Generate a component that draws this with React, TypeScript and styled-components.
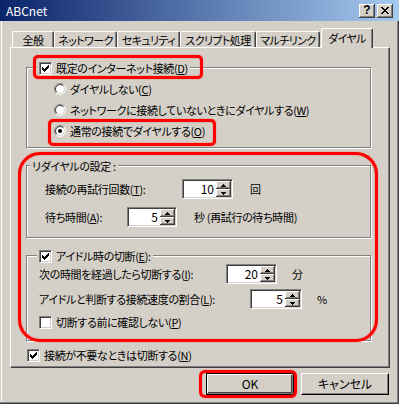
import React from "react";
import styled, { createGlobalStyle } from "styled-components";

const Global = createGlobalStyle`
  html, body { margin: 0; padding: 0; background: #D4D0C8; }
  body {
    font-family: "Noto Sans CJK JP", "Noto Sans", sans-serif;
    font-size: 11px;
    color: #000;
    font-feature-settings: "palt" 1;
    letter-spacing: -0.35px;
  }
  * { box-sizing: border-box; }
  u { text-decoration: underline; text-underline-offset: 1px; }
`;

const Window = styled.div`
  width: 399px;
  height: 404px;
  overflow: hidden;
  background: #d4d0c8;
  display: flex;
  flex-direction: column;
  box-shadow: inset -1px -1px 0 #404040, inset -2px -2px 0 #808080,
    inset 1px 0 0 #d4d0c8, inset 2px 0 0 #ffffff;
`;

const TitleBar = styled.div`
  height: 21px;
  flex: none;
  display: flex;
  align-items: center;
  justify-content: space-between;
  padding: 0 6px 0 6px;
  background: linear-gradient(to right, #0a246a, #a6caf0);
`;

const Title = styled.span`
  color: #fff;
  font-size: 12px;
  line-height: 14px;
  letter-spacing: 0;
`;

const CaptionButtons = styled.div`
  display: flex;
  gap: 2px;
`;

const CaptionBtn = styled.div`
  width: 16px;
  height: 14px;
  background: #d4d0c8;
  display: flex;
  align-items: center;
  justify-content: center;
  box-shadow: inset -1px -1px 0 #404040, inset 1px 1px 0 #fff,
    inset -2px -2px 0 #808080;
  font-family: "Liberation Sans", Arial, sans-serif;
  font-weight: bold;
  font-size: 12px;
  line-height: 12px;
  letter-spacing: 0;
  padding-bottom: 1px;
`;

const TabRow = styled.div`
  display: flex;
  align-items: flex-end;
  height: 19px;
  margin: 7px 0 0 12px;
  position: relative;
  z-index: 1;
`;

const Tab = styled.div<{ $w: number; $active?: boolean; $ml?: number }>`
  width: ${(p) => p.$w}px;
  height: ${(p) => (p.$active ? 20 : 16)}px;
  margin-left: ${(p) => p.$ml ?? 0}px;
  margin-bottom: ${(p) => (p.$active ? -1 : 0)}px;
  background: #d4d0c8;
  border-top: 1px solid #fff;
  border-left: 1px solid #fff;
  border-right: 1px solid #404040;
  border-radius: 2px 2px 0 0;
  box-shadow: inset -1px 0 0 #808080;
  display: flex;
  align-items: ${(p) => (p.$active ? "flex-start" : "center")};
  padding-top: ${(p) => (p.$active ? 2 : 0)}px;
  justify-content: center;
  white-space: nowrap;
  line-height: 14px;
  letter-spacing: -0.6px;
`;

const Panel = styled.div`
  width: 380px;
  height: 321px;
  margin-left: 10px;
  flex: none;
  border-top: 1px solid #fff;
  border-left: 1px solid #fff;
  border-right: 1px solid #404040;
  border-bottom: 1px solid #404040;
  box-shadow: inset -1px -1px 0 #808080;
  padding: 19px 0 0 15px;
  display: flex;
  flex-direction: column;
  align-items: flex-start;
`;

const Group = styled.div<{ $h: number; $mt?: number }>`
  position: relative;
  width: 345px;
  height: ${(p) => p.$h}px;
  margin-top: ${(p) => p.$mt ?? 0}px;
  flex: none;
  border: 1px solid #808080;
  box-shadow: 1px 1px 0 #fff, inset 1px 1px 0 #fff;
  display: flex;
  flex-direction: column;
  align-items: flex-start;
`;

const GroupBody = styled.div<{ $pad: number }>`
  padding-left: ${(p) => p.$pad}px;
  display: flex;
  flex-direction: column;
  align-items: flex-start;
`;

const Legend = styled.div<{ $ml: number }>`
  height: 16px;
  margin-top: -8px;
  margin-left: ${(p) => p.$ml}px;
  padding: 0 2px;
  background: #d4d0c8;
  display: flex;
  align-items: center;
  gap: 4px;
  white-space: nowrap;
  line-height: 14px;
`;

const GroupPair = styled.div`
  position: relative;
  margin-top: 17px;
  display: flex;
  flex-direction: column;
`;

const OptionRow = styled.div<{ $mt?: number; $ml?: number }>`
  height: 14px;
  margin-top: ${(p) => p.$mt ?? 0}px;
  margin-left: ${(p) => p.$ml ?? 0}px;
  display: flex;
  align-items: center;
  gap: 4px;
  white-space: nowrap;
  line-height: 14px;
`;

const FieldRow = styled.div<{ $mt?: number }>`
  height: 20px;
  margin-top: ${(p) => p.$mt ?? 0}px;
  display: flex;
  align-items: center;
  white-space: nowrap;
  line-height: 14px;
`;

const FieldLabel = styled.span<{ $w: number }>`
  width: ${(p) => p.$w}px;
  flex: none;
`;

const Unit = styled.span<{ $ml: number }>`
  margin-left: ${(p) => p.$ml}px;
`;

const SpinBox = styled.div<{ $w: number }>`
  width: ${(p) => p.$w}px;
  height: 20px;
  flex: none;
  display: flex;
  background: #fff;
  border: 1px solid;
  border-color: #808080 #fff #fff #808080;
  box-shadow: inset 1px 1px 0 #404040, inset -1px -1px 0 #d4d0c8;
  padding: 1px;
`;

const SpinValue = styled.span`
  flex: 1;
  text-align: right;
  padding-right: 2px;
  line-height: 16px;
  font-size: 12px;
  letter-spacing: 0;
`;

const SpinButtons = styled.div`
  width: 15px;
  display: flex;
  flex-direction: column;
`;

const SpinBtn = styled.div`
  flex: 1;
  background: #d4d0c8;
  display: flex;
  align-items: center;
  justify-content: center;
  box-shadow: inset -1px -1px 0 #404040, inset 1px 1px 0 #fff,
    inset -2px -2px 0 #808080;
`;

const BoxCheck = styled.div`
  width: 13px;
  height: 13px;
  flex: none;
  background: #fff;
  border: 1px solid;
  border-color: #808080 #fff #fff #808080;
  box-shadow: inset 1px 1px 0 #404040, inset -1px -1px 0 #d4d0c8;
  display: flex;
  align-items: center;
  justify-content: center;
`;

const ButtonRow = styled.div`
  display: flex;
  justify-content: flex-end;
  gap: 7px;
  padding-right: 10px;
  margin-top: 5px;
`;

const PushButton = styled.div<{ $default?: boolean }>`
  position: relative;
  width: 88px;
  height: 22px;
  display: flex;
  align-items: center;
  justify-content: center;
  background: #d4d0c8;
  border: 1px solid ${(p) => (p.$default ? "#000" : "#fff")};
  border-right-color: #000;
  border-bottom-color: #000;
  box-shadow: inset -1px -1px 0 #808080
    ${(p) => (p.$default ? ", inset 1px 1px 0 #fff, inset -2px -2px 0 #404040" : "")};
  line-height: 14px;
  font-size: 12px;
  letter-spacing: 0;
`;

const Highlight = styled.div<{ $l: number; $t: number; $w: number; $h: number; $r: number }>`
  position: absolute;
  left: ${(p) => p.$l}px;
  top: ${(p) => p.$t}px;
  width: ${(p) => p.$w}px;
  height: ${(p) => p.$h}px;
  border: 3px solid #ff0000;
  border-radius: ${(p) => p.$r}px;
  box-shadow: 0 0 1px #ff0000, inset 0 0 1px #ff0000;
  pointer-events: none;
`;

const PixelArt = ({ rows }: { rows: string[] }) => {
  const w = rows[0].length;
  const h = rows.length;
  let d = "";
  rows.forEach((r, y) => {
    for (let x = 0; x < r.length; x++) if (r[x] === "#") d += `M${x} ${y}h1v1h-1z`;
  });
  return (
    <svg width={w} height={h} viewBox={`0 0 ${w} ${h}`} shapeRendering="crispEdges">
      <path d={d} fill="#000" />
    </svg>
  );
};

const CLOSE = [
  "##....##",
  ".##..##.",
  "..####..",
  "...##...",
  "..####..",
  ".##..##.",
  "##....##",
];

const CHECK = [
  "......#",
  ".....##",
  "#...###",
  "##.###.",
  "#####..",
  ".###...",
  "..#....",
];

const UP = ["..#..", ".###.", "#####"];
const DOWN = ["#####", ".###.", "..#.."];

const CheckBox = ({ checked }: { checked?: boolean }) => (
  <BoxCheck>{checked && <PixelArt rows={CHECK} />}</BoxCheck>
);

const Radio = ({ checked }: { checked?: boolean }) => {
  const arc = (r: number, sweep: number, color: string) => {
    const k = r * 0.7071;
    return (
      <path
        d={`M${6 - k} ${6 + k} A${r} ${r} 0 0 ${sweep} ${6 + k} ${6 - k}`}
        stroke={color}
        fill="none"
        strokeWidth={1}
      />
    );
  };
  return (
    <svg width="12" height="12" viewBox="0 0 12 12" style={{ flex: "none" }}>
      <circle cx="6" cy="6" r="5" fill="#fff" />
      {arc(5.5, 1, "#808080")}
      {arc(5.5, 0, "#ffffff")}
      {arc(4.5, 1, "#404040")}
      {arc(4.5, 0, "#d4d0c8")}
      {checked && <circle cx="6" cy="6" r="2" fill="#000" />}
    </svg>
  );
};

const Spinner = ({ value, w }: { value: string; w: number }) => (
  <SpinBox $w={w}>
    <SpinValue>{value}</SpinValue>
    <SpinButtons>
      <SpinBtn>
        <PixelArt rows={UP} />
      </SpinBtn>
      <SpinBtn>
        <PixelArt rows={DOWN} />
      </SpinBtn>
    </SpinButtons>
  </SpinBox>
);

const tabs: { label: string; w: number }[] = [
  { label: "全般", w: 42 },
  { label: "ネットワーク", w: 63 },
  { label: "セキュリティ", w: 63 },
  { label: "スクリプト処理", w: 76 },
  { label: "マルチリンク", w: 64 },
];

export default function App() {
  return (
    <>
      <Global />
      <Window>
        <TitleBar>
          <Title>ABCnet</Title>
          <CaptionButtons>
            <CaptionBtn>?</CaptionBtn>
            <CaptionBtn>
              <PixelArt rows={CLOSE} />
            </CaptionBtn>
          </CaptionButtons>
        </TitleBar>

        <TabRow>
          {tabs.map((t) => (
            <Tab key={t.label} $w={t.w}>
              {t.label}
            </Tab>
          ))}
          <Tab $w={52} $ml={1} $active>
            ダイヤル
          </Tab>
        </TabRow>

        <Panel>
          <Group $h={81}>
            <Legend $ml={10}>
              <CheckBox checked />
              <span>
                既定のインターネット接続(<u>D</u>)
              </span>
            </Legend>
            <GroupBody $pad={27}>
              <OptionRow $mt={6}>
                <Radio />
                <span>
                  ダイヤルしない(<u>C</u>)
                </span>
              </OptionRow>
              <OptionRow $mt={7}>
                <Radio />
                <span>
                  ネットワークに接続していないときにダイヤルする(<u>W</u>)
                </span>
              </OptionRow>
              <OptionRow $mt={7}>
                <Radio checked />
                <span>
                  通常の接続でダイヤルする(<u>O</u>)
                </span>
              </OptionRow>
            </GroupBody>
            <Highlight $l={6} $t={-13} $w={170} $h={24} $r={5} />
            <Highlight $l={21} $t={51} $w={168} $h={27} $r={5} />
          </Group>

          <GroupPair>
            <Group $h={73}>
              <Legend $ml={3}>リダイヤルの設定 :</Legend>
              <GroupBody $pad={18}>
                <FieldRow $mt={5}>
                  <FieldLabel $w={137}>
                    接続の再試行回数(<u>T</u>):
                  </FieldLabel>
                  <Spinner value="10" w={51} />
                  <Unit $ml={17}>回</Unit>
                </FieldRow>
                <FieldRow $mt={8}>
                  <FieldLabel $w={82}>
                    待ち時間(<u>A</u>):
                  </FieldLabel>
                  <Spinner value="5" w={50} />
                  <Unit $ml={17}>秒 (再試行の待ち時間)</Unit>
                </FieldRow>
              </GroupBody>
            </Group>

            <Group $h={86} $mt={17}>
              <Legend $ml={10}>
                <CheckBox checked />
                <span>
                  アイドル時の切断(<u>E</u>):
                </span>
              </Legend>
              <GroupBody $pad={12}>
                <FieldRow>
                  <FieldLabel $w={187}>
                    次の時間を経過したら切断する(<u>I</u>):
                  </FieldLabel>
                  <Spinner value="20" w={51} />
                  <Unit $ml={15}>分</Unit>
                </FieldRow>
                <FieldRow $mt={5}>
                  <FieldLabel $w={211}>
                    アイドルと判断する接続速度の割合(<u>L</u>):
                  </FieldLabel>
                  <Spinner value="5" w={52} />
                  <Unit $ml={15}>%</Unit>
                </FieldRow>
                <OptionRow $mt={6}>
                  <CheckBox />
                  <span>
                    切断する前に確認しない(<u>P</u>)
                  </span>
                </OptionRow>
              </GroupBody>
            </Group>
            <Highlight $l={-8} $t={-13} $w={360} $h={190} $r={22} />
          </GroupPair>

          <OptionRow $mt={7} $ml={1}>
            <CheckBox checked />
            <span>
              接続が不要なときは切断する(<u>N</u>)
            </span>
          </OptionRow>
        </Panel>

        <ButtonRow>
          <PushButton $default>
            OK
            <Highlight $l={-8} $t={-4} $w={98} $h={28} $r={6} />
          </PushButton>
          <PushButton>キャンセル</PushButton>
        </ButtonRow>
      </Window>
    </>
  );
}
